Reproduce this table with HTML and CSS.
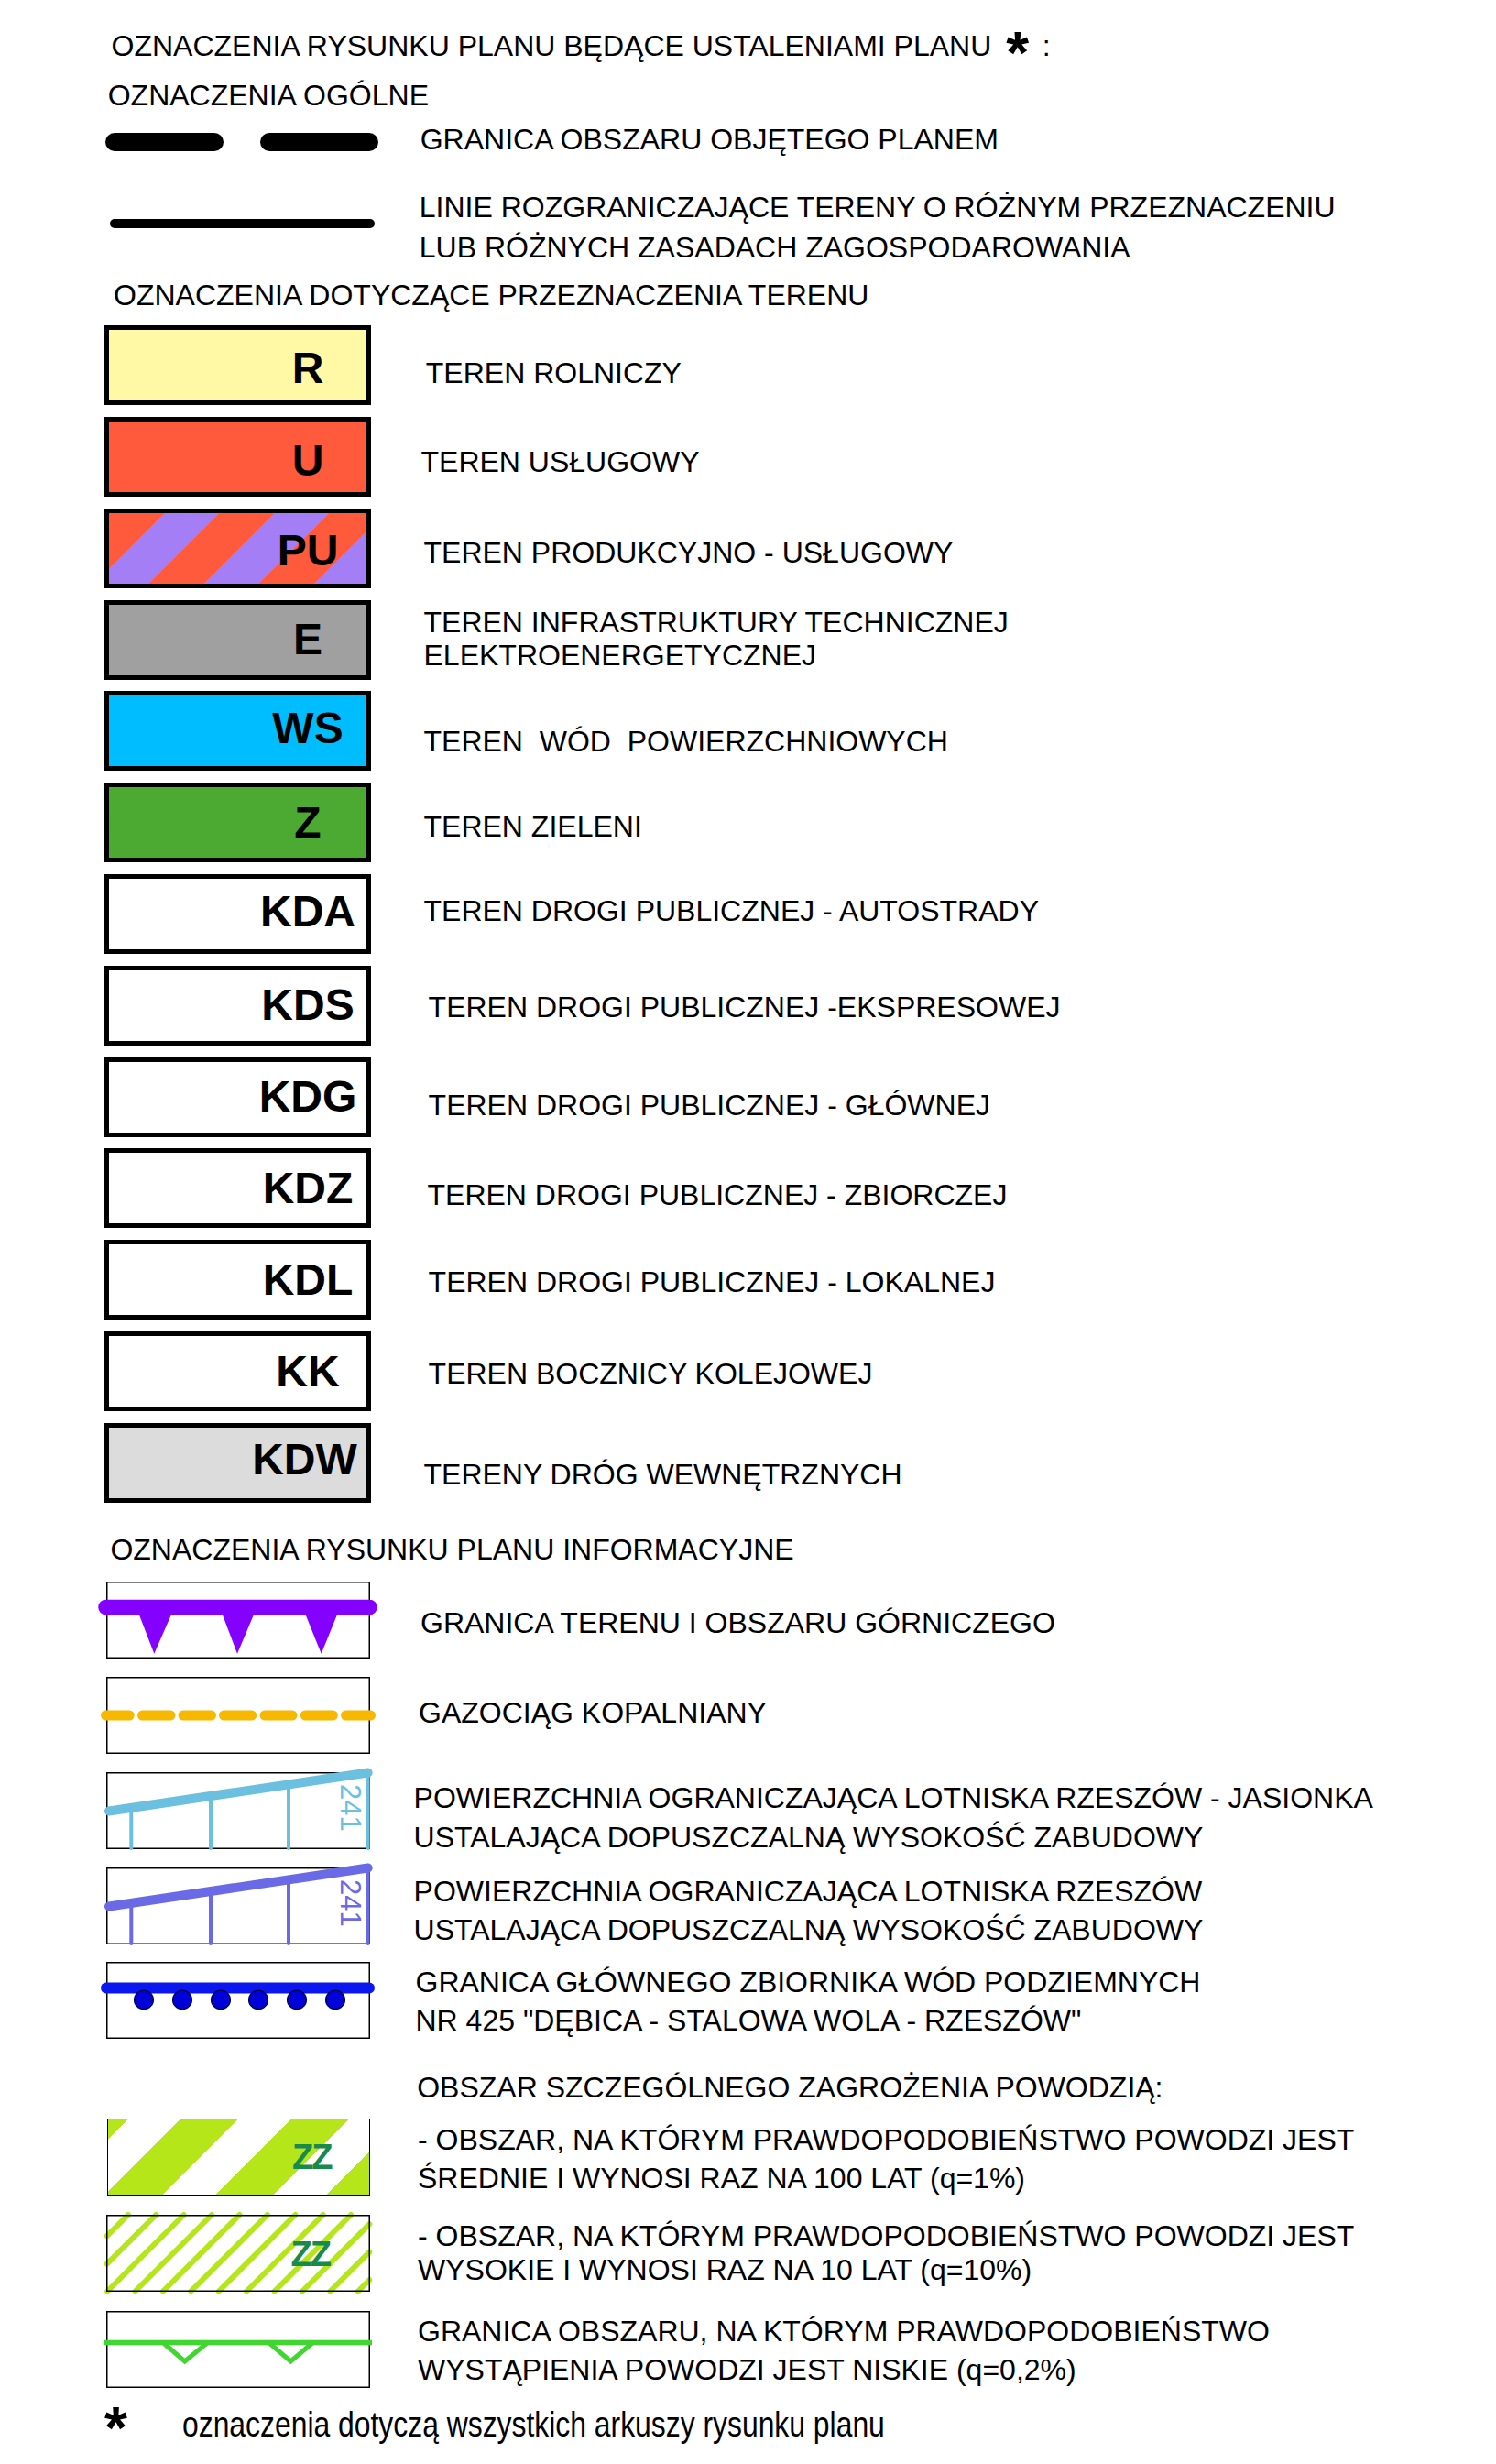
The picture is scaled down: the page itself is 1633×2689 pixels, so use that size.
FILE: index.html
```html
<!DOCTYPE html>
<html lang="pl">
<head>
<meta charset="utf-8">
<title>Oznaczenia rysunku planu</title>
<link rel="stylesheet" href="styles.css">
</head>
<body>
<main class="page">
  <p class="title">OZNACZENIA RYSUNKU PLANU BĘDĄCE USTALENIAMI PLANU<span class="tstar">*</span><span class="tcolon">:</span></p>
  <p class="head h-general">OZNACZENIA OGÓLNE</p>

  <div class="row row-dash">
    <div class="dashes"><span></span><span></span></div>
    <p class="txt">GRANICA OBSZARU OBJĘTEGO PLANEM</p>
  </div>
  <div class="row row-solid">
    <div class="solid"></div>
    <p class="txt">LINIE ROZGRANICZAJĄCE TERENY O RÓŻNYM PRZEZNACZENIU<br>LUB RÓŻNYCH ZASADACH ZAGOSPODAROWANIA</p>
  </div>

  <p class="head h-use">OZNACZENIA DOTYCZĄCE PRZEZNACZENIA TERENU</p>
  <div class="landlist">
    <div class="lrow"><div class="box c-r lbl-low2">R</div><p class="ltxt t-r">TEREN ROLNICZY</p></div>
    <div class="lrow"><div class="box c-u lbl-low3">U</div><p class="ltxt t-u">TEREN USŁUGOWY</p></div>
    <div class="lrow"><div class="box c-pu lbl-low1">PU</div><p class="ltxt t-pu">TEREN PRODUKCYJNO - USŁUGOWY</p></div>
    <div class="lrow"><div class="box c-e">E</div><p class="ltxt t-e">TEREN INFRASTRUKTURY TECHNICZNEJ<br>ELEKTROENERGETYCZNEJ</p></div>
    <div class="lrow"><div class="box c-ws lbl-high1">WS</div><p class="ltxt t-ws">TEREN&nbsp; WÓD&nbsp; POWIERZCHNIOWYCH</p></div>
    <div class="lrow"><div class="box c-z">Z</div><p class="ltxt t-z">TEREN ZIELENI</p></div>
    <div class="lrow"><div class="box lbl-high1">KDA</div><p class="ltxt t-kda">TEREN DROGI PUBLICZNEJ - AUTOSTRADY</p></div>
    <div class="lrow"><div class="box">KDS</div><p class="ltxt t-kds">TEREN DROGI PUBLICZNEJ -EKSPRESOWEJ</p></div>
    <div class="lrow"><div class="box">KDG</div><p class="ltxt t-kdg">TEREN DROGI PUBLICZNEJ - GŁÓWNEJ</p></div>
    <div class="lrow"><div class="box">KDZ</div><p class="ltxt t-kdz">TEREN DROGI PUBLICZNEJ - ZBIORCZEJ</p></div>
    <div class="lrow"><div class="box">KDL</div><p class="ltxt t-kdl">TEREN DROGI PUBLICZNEJ - LOKALNEJ</p></div>
    <div class="lrow"><div class="box">KK</div><p class="ltxt t-kk">TEREN BOCZNICY KOLEJOWEJ</p></div>
    <div class="lrow"><div class="box c-kdw lbl-w lbl-high2">KDW</div><p class="ltxt t-kdw">TERENY DRÓG WEWNĘTRZNYCH</p></div>
  </div>

  <p class="head h-info">OZNACZENIA RYSUNKU PLANU INFORMACYJNE</p>
  <div class="infolist">
    <div class="irow">
      <svg class="sym" viewBox="0 0 312 84" width="312" height="84">
        <rect class="frame" x="12.75" y="0.75" width="286.5" height="82.5"/>
        <line class="mine-line" x1="11.6" y1="28" x2="299.4" y2="28"/>
        <polygon class="mine-tri" points="46.7,33 84.3,33 64.3,78.7"/>
        <polygon class="mine-tri" points="137.7,33 174.3,33 155,78.7"/>
        <polygon class="mine-tri" points="228.3,33 265.3,33 246.7,78.7"/>
      </svg>
      <p class="itxt i-mine">GRANICA TERENU I OBSZARU GÓRNICZEGO</p>
    </div>
    <div class="irow">
      <svg class="sym" viewBox="0 0 312 84" width="312" height="84">
        <rect class="frame" x="12.75" y="0.75" width="286.5" height="82.5"/>
        <g class="gas">
          <line x1="11.5" y1="42" x2="37.2" y2="42"/>
          <line x1="51.5" y1="42" x2="82" y2="42"/>
          <line x1="96" y1="42" x2="126.5" y2="42"/>
          <line x1="140.5" y1="42" x2="170.7" y2="42"/>
          <line x1="185" y1="42" x2="215" y2="42"/>
          <line x1="229.3" y1="42" x2="259.3" y2="42"/>
          <line x1="273.5" y1="42" x2="300.5" y2="42"/>
        </g>
      </svg>
      <p class="itxt i-gas">GAZOCIĄG KOPALNIANY</p>
    </div>
    <div class="irow">
      <svg class="sym air1" viewBox="0 0 312 84" width="312" height="84">
        <rect class="frame" x="12.75" y="0.75" width="286.5" height="82.5"/>
        <line class="air-main" x1="15" y1="42.5" x2="297.7" y2="0.5"/>
        <line class="air-tick" x1="39.3" y1="38.9" x2="39.3" y2="83"/>
        <line class="air-tick" x1="126" y1="26" x2="126" y2="83"/>
        <line class="air-tick" x1="211" y1="13.4" x2="211" y2="83"/>
        <line class="air-tick" x1="297.7" y1="0.5" x2="297.7" y2="83"/>
        <text class="air-num" transform="translate(268 13) rotate(90)">241</text>
      </svg>
      <p class="itxt i-air i-air1">POWIERZCHNIA OGRANICZAJĄCA LOTNISKA RZESZÓW - JASIONKA<br>USTALAJĄCA DOPUSZCZALNĄ WYSOKOŚĆ ZABUDOWY</p>
    </div>
    <div class="irow">
      <svg class="sym air2" viewBox="0 0 312 84" width="312" height="84">
        <rect class="frame" x="12.75" y="0.75" width="286.5" height="82.5"/>
        <line class="air-main" x1="15" y1="42.5" x2="297.7" y2="0.5"/>
        <line class="air-tick" x1="39.3" y1="38.9" x2="39.3" y2="83"/>
        <line class="air-tick" x1="126" y1="26" x2="126" y2="83"/>
        <line class="air-tick" x1="211" y1="13.4" x2="211" y2="83"/>
        <line class="air-tick" x1="297.7" y1="0.5" x2="297.7" y2="83"/>
        <text class="air-num" transform="translate(268 13) rotate(90)">241</text>
      </svg>
      <p class="itxt i-air i-air2">POWIERZCHNIA OGRANICZAJĄCA LOTNISKA RZESZÓW<br>USTALAJĄCA DOPUSZCZALNĄ WYSOKOŚĆ ZABUDOWY</p>
    </div>
    <div class="irow">
      <svg class="sym" viewBox="0 0 312 84" width="312" height="84">
        <rect class="frame" x="12.75" y="0.75" width="286.5" height="82.5"/>
        <line class="water-line" x1="12" y1="28.6" x2="299" y2="28.6"/>
        <ellipse class="water-dot" cx="53" cy="41.4" rx="10.4" ry="10.2"/>
        <ellipse class="water-dot" cx="95" cy="41.4" rx="10.4" ry="10.2"/>
        <ellipse class="water-dot" cx="137" cy="41.4" rx="10.4" ry="10.2"/>
        <ellipse class="water-dot" cx="178" cy="41.4" rx="10.4" ry="10.2"/>
        <ellipse class="water-dot" cx="220" cy="41.4" rx="10.4" ry="10.2"/>
        <ellipse class="water-dot" cx="262" cy="41.4" rx="10.4" ry="10.2"/>
      </svg>
      <p class="itxt i-water">GRANICA GŁÓWNEGO ZBIORNIKA WÓD PODZIEMNYCH<br>NR 425 "DĘBICA - STALOWA WOLA - RZESZÓW"</p>
    </div>
  </div>

  <p class="head h-flood">OBSZAR SZCZEGÓLNEGO ZAGROŻENIA POWODZIĄ:</p>
  <div class="floodlist">
    <div class="irow">
      <div class="sym"><div class="zzbox"><span class="zz">ZZ</span></div></div>
      <p class="itxt f-mid">- OBSZAR, NA KTÓRYM PRAWDOPODOBIEŃSTWO POWODZI JEST<br>ŚREDNIE I WYNOSI RAZ NA 100 LAT (q=1%)</p>
    </div>
    <div class="irow">
      <svg class="sym" viewBox="0 0 312 84" width="312" height="84">
        <g class="hatch">
          <line x1="12.7" y1="23.2" x2="35.9" y2="0"/>
          <line x1="12.7" y1="53.6" x2="66.3" y2="0"/>
          <line x1="13.2" y1="83.5" x2="96.7" y2="0"/>
          <line x1="43.6" y1="83.5" x2="127.1" y2="0"/>
          <line x1="74" y1="83.5" x2="157.5" y2="0"/>
          <line x1="104.4" y1="83.5" x2="187.9" y2="0"/>
          <line x1="134.8" y1="83.5" x2="218.3" y2="0"/>
          <line x1="165.2" y1="83.5" x2="248.7" y2="0"/>
          <line x1="195.6" y1="83.5" x2="279.1" y2="0"/>
          <line x1="226" y1="83.5" x2="299.3" y2="10.2"/>
          <line x1="256.4" y1="83.5" x2="299.3" y2="40.6"/>
          <line x1="286.8" y1="83.5" x2="299.3" y2="71"/>
        </g>
        <rect class="frame" x="12.75" y="0.75" width="286.5" height="82.5"/>
        <text class="zz-svg" x="213.5" y="55.7">ZZ</text>
      </svg>
      <p class="itxt f-high">- OBSZAR, NA KTÓRYM PRAWDOPODOBIEŃSTWO POWODZI JEST<br>WYSOKIE I WYNOSI RAZ NA 10 LAT (q=10%)</p>
    </div>
    <div class="irow">
      <svg class="sym" viewBox="0 0 312 84" width="312" height="84">
        <rect class="frame" x="12.75" y="0.75" width="286.5" height="82.5"/>
        <line class="flood-main" x1="9.3" y1="34.5" x2="302" y2="34.5"/>
        <polyline class="flood-v" points="74.5,35 97.7,55 122,35"/>
        <polyline class="flood-v" points="190,35 213.3,55 237,35"/>
      </svg>
      <p class="itxt f-low">GRANICA OBSZARU, NA KTÓRYM PRAWDOPODOBIEŃSTWO<br>WYSTĄPIENIA POWODZI JEST NISKIE (q=0,2%)</p>
    </div>
  </div>

  <p class="foot"><span class="fstar">*</span><span class="ftext">oznaczenia dotyczą wszystkich arkuszy rysunku planu</span></p>
</main>
</body>
</html>
```
FILE: styles.css
```css
html, body {
  margin: 0;
  padding: 0;
  background: #ffffff;
}

body {
  color: #000000;
  font-family: "Liberation Sans", Arial, sans-serif;
  font-size: 32px;
}

p {
  margin: 0;
}

.page {
  width: 1633px;
  height: 2689px;
  box-sizing: border-box;
  padding-top: 34px;
  line-height: 32px;
  overflow: hidden;
}

/* ---------- headings ---------- */
.title {
  margin-left: 121.5px;
  white-space: nowrap;
}

.tstar {
  font-weight: bold;
  font-size: 64px;
  line-height: 0;
  vertical-align: -19px;
  margin-left: 16px;
}

.tcolon {
  margin-left: 14.6px;
}

.head {
  white-space: nowrap;
}

.h-general {
  margin: 22px 0 0 117.7px;
}

.h-use {
  margin: 12.75px 0 0 124px;
}

.h-info {
  margin: 35.2px 0 0 120.4px;
}

.h-flood {
  margin: 36.3px 0 0 455.2px;
}

/* ---------- general lines ---------- */
.row {
  display: flex;
  align-items: flex-start;
}

.txt {
  white-space: nowrap;
}

.row-dash {
  margin-top: 15.8px;
  height: 32px;
}

.dashes {
  display: flex;
  gap: 40px;
  margin: 9.2px 0 0 115px;
  width: 298px;
  flex: none;
}

.dashes span {
  flex: 1;
  height: 20px;
  border-radius: 10px;
  background: #000000;
}

.row-dash .txt {
  margin-left: 45.7px;
}

.row-solid {
  margin-top: 36px;
}

.solid {
  flex: none;
  margin: 35.2px 0 0 120px;
  width: 289px;
  height: 10px;
  border-radius: 5px;
  background: #000000;
}

.row-solid .txt {
  margin-left: 48.8px;
  line-height: 44.5px;
}

/* ---------- land use boxes ---------- */
.landlist {
  margin-top: 17.7px;
  display: grid;
  row-gap: 12.8px;
}

.lrow {
  display: flex;
  align-items: flex-start;
  height: 87px;
}

.box {
  flex: none;
  margin-left: 114px;
  width: 291px;
  height: 87px;
  box-sizing: border-box;
  border: 5px solid #000000;
  background: #ffffff;
  display: flex;
  align-items: center;
  justify-content: center;
  padding-left: 153px;
  font-weight: bold;
  font-size: 48px;
  line-height: 48px;
}

.lbl-w {
  padding-left: 146px;
}

/* small vertical corrections of the box labels */
.lbl-low1 { padding-top: 5px; }
.lbl-low2 { padding-top: 7px; }
.lbl-low3 { padding-top: 9px; }
.lbl-high1 { padding-bottom: 5px; }
.lbl-high2 { padding-bottom: 7px; }

.c-r { background: #fff9a5; }
.c-u { background: #ff5a3c; }
.c-pu {
  background: repeating-linear-gradient(135deg, #ff5a3c 0px, #ff5a3c 42.5px, #a47ef4 42.5px, #a47ef4 85px);
}
.c-e { background: #a0a0a0; }
.c-ws { background: #00bdff; }
.c-z { background: #4caa33; }
.c-kdw { background: #dcdcdc; }

.ltxt {
  white-space: nowrap;
  margin-left: 57.5px;
}

.t-r { padding-top: 36px; margin-left: 59.8px; }
.t-u { padding-top: 32.6px; margin-left: 54.5px; }
.t-pu { padding-top: 31.8px; }
.t-e { padding-top: 5.9px; line-height: 36.7px; }
.t-ws { padding-top: 38.7px; }
.t-z { padding-top: 31.9px; }
.t-kda { padding-top: 24.1px; }
.t-kds { padding-top: 29.3px; margin-left: 62.6px; }
.t-kdg { padding-top: 36.2px; margin-left: 62.6px; }
.t-kdz { padding-top: 35px; margin-left: 61.5px; }
.t-kdl { padding-top: 29.9px; margin-left: 62.6px; }
.t-kk { padding-top: 30.1px; margin-left: 62.6px; }
.t-kdw { padding-top: 40.3px; }

/* ---------- informative symbols ---------- */
.infolist {
  margin-top: 19.2px;
  display: grid;
  row-gap: 19.8px;
}

.floodlist {
  margin-top: 18.8px;
  display: grid;
  row-gap: 21px;
}

.irow {
  display: flex;
  align-items: flex-start;
  height: 84px;
}

.sym {
  flex: none;
  display: block;
  margin-left: 104px;
  width: 312px;
  height: 84px;
  overflow: visible;
}

.itxt {
  white-space: nowrap;
}

.i-mine { margin-left: 43px; padding-top: 28.8px; }
.i-gas { margin-left: 41px; padding-top: 23.3px; }
.i-air { margin-left: 35.6px; line-height: 42.5px; }
.i-air1 { padding-top: 7.6px; }
.i-air2 { padding-top: 5.4px; }
.i-water { margin-left: 37.5px; line-height: 42.5px; padding-top: 0.6px; }

.f-mid { margin-left: 40px; line-height: 41.7px; padding-top: 2.6px; }
.f-high { margin-left: 40px; line-height: 36.6px; padding-top: 4.9px; }
.f-low { margin-left: 40px; line-height: 42px; padding-top: 0.5px; }

/* svg parts */
.frame {
  fill: none;
  stroke: #000000;
  stroke-width: 1.5;
}

.mine-line {
  stroke: #8400ff;
  stroke-width: 16.7;
  stroke-linecap: round;
}

.mine-tri {
  fill: #8400ff;
}

.gas line {
  stroke: #f8b800;
  stroke-width: 11;
  stroke-linecap: round;
}

.air-main {
  stroke-width: 10;
  stroke-linecap: round;
}

.air-tick {
  stroke-width: 4;
  stroke-linecap: round;
}

.air1 line { stroke: #6bbfdf; }
.air1 text { fill: #6bbfdf; }
.air2 line { stroke: #6a6ae6; }
.air2 text { fill: #6a6ae6; }

.air-num {
  font-family: "Liberation Sans", Arial, sans-serif;
  font-size: 31px;
}

.water-line {
  stroke: #0a18ef;
  stroke-width: 12;
  stroke-linecap: round;
}

.water-dot {
  fill: #0000d8;
  stroke: #00004a;
  stroke-width: 1.3;
}

.hatch line {
  stroke: #b4e61a;
  stroke-width: 6;
  stroke-linecap: round;
}

.zz-svg {
  font-family: "Liberation Sans", Arial, sans-serif;
  font-weight: bold;
  font-size: 38px;
  letter-spacing: -2px;
  fill: #178a4c;
}

.flood-main {
  stroke: #3fd62f;
  stroke-width: 5.7;
}

.flood-v {
  fill: none;
  stroke: #3fd62f;
  stroke-width: 5;
}

.zzbox {
  margin-left: 12.5px;
  width: 287px;
  height: 84px;
  box-sizing: border-box;
  border: 1.5px solid #000000;
  background: repeating-linear-gradient(135deg, #ffffff 14.9px, #ffffff 55.5px, #b4e61a 55.5px, #b4e61a 100.3px);
  display: flex;
  align-items: center;
  justify-content: flex-end;
  padding-right: 41px;
}

.zz {
  font-weight: bold;
  font-size: 38px;
  line-height: 38px;
  letter-spacing: -2px;
  color: #178a4c;
}

/* ---------- footer ---------- */
.foot {
  margin: 16px 0 0 114px;
  font-size: 39px;
  line-height: 48px;
  white-space: nowrap;
}

.fstar {
  display: inline-block;
  width: 84.6px;
  font-weight: bold;
  font-size: 64px;
  line-height: 0;
  vertical-align: -13px;
}

/* narrow typeface emulated by horizontal compression */
.ftext {
  display: inline-block;
  font-size: 39px;
  transform: scaleX(0.817);
  transform-origin: left center;
}
```
